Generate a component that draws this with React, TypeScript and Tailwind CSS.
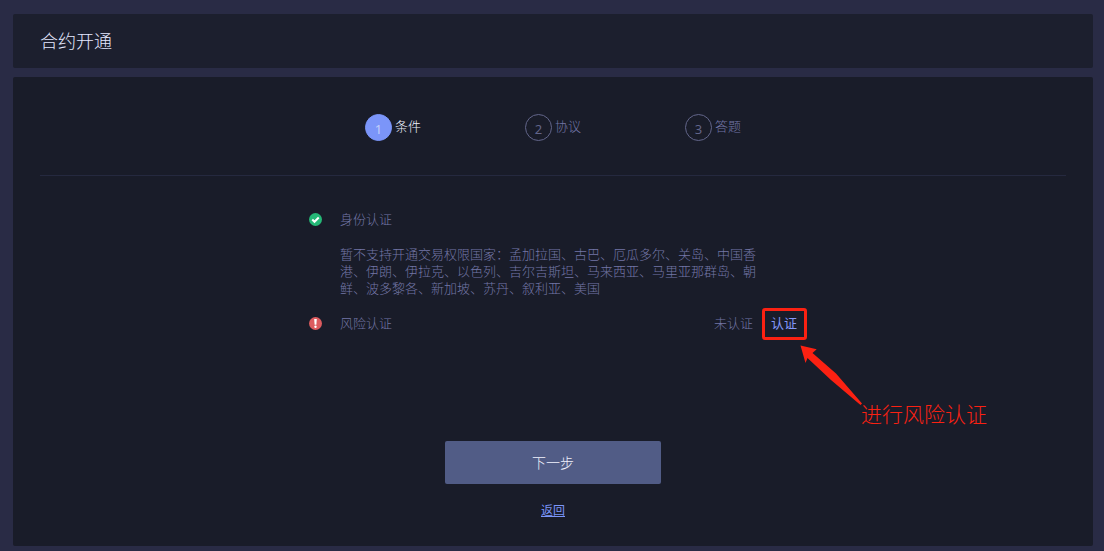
import clsx from 'clsx'

const steps = ['条件', '协议', '答题']

function PassIcon() {
    return (
        <svg className="size-[13px]" viewBox="0 0 26 26" aria-hidden="true">
            <circle cx="13" cy="13" r="13" fill="#25b877" />
            <path d="M6.500 13l4.500 4.500L19.500 9" fill="none" stroke="#fff" strokeWidth="4" />
        </svg>
    )
}

function WarnIcon() {
    return (
        <svg className="size-[13px]" viewBox="0 0 26 26" aria-hidden="true">
            <circle cx="13" cy="13" r="13" fill="#dc5b5f" />
            <path d="M10.4 4h5.2l-.8 11.500h-3.600z" fill="#fff" />
            <circle cx="13" cy="19.6" r="2.4" fill="#fff" />
        </svg>
    )
}

function Steps() {
    return (
        <ol className="flex justify-center gap-[104px] border-b border-[#25293f] pt-[37px] pb-[34px]">
            {steps.map((label, i) => (
                <li key={label} className="flex gap-[3px]">
                    <span
                        className={clsx(
                            'flex size-[27px] items-center justify-center rounded-full border pt-0.5 leading-4 font-normal',
                            i === 0 ? 'border-[#7b95f9] bg-[#7b95f9] text-[#c3cefb]' : 'border-[#62658a] text-[#62658a]'
                        )}
                    >
                        {i + 1}
                    </span>
                    <span className={clsx('leading-6', i === 0 ? 'text-[#eef1ff]' : 'text-[#7376a6]')}>{label}</span>
                </li>
            ))}
        </ol>
    )
}

function Callout() {
    return (
        <div className="pointer-events-none absolute -top-[6px] -left-[9px] text-[#fb2112]">
            <div className="h-8 w-[45px] rounded-[3px] border-3 border-[#fb2112]" />
            <svg className="absolute top-9 left-9" width="66" height="64" viewBox="0 0 66 64" aria-hidden="true">
                <path d="M2.5 1.5L18.7 5.3L14.5 9L38 29.5L64 59.5L62.5 61L33 36L9.5 14L7.5 19Z" fill="currentColor" />
            </svg>
            <p className="absolute top-[90px] left-[99px] text-[21px] leading-8 whitespace-nowrap">进行风险认证</p>
        </div>
    )
}

export default function App() {
    return (
        <div className="flex min-h-screen flex-col gap-[9px] bg-[#292b45] pt-[14px] pr-[11px] pb-[5px] pl-[13px] font-['Noto_Sans','Noto_Sans_CJK_SC',sans-serif] text-[13px] font-light text-[#7376a6]">
            <header className="rounded-xs bg-[#1c1f2e] px-[27px] pt-[14px] pb-[13px]">
                <h1 className="text-lg leading-[27px] text-[#e4e8ff]">合约开通</h1>
            </header>

            <main className="flex-1 rounded-xs bg-[#191c29] px-[27px]">
                <Steps />

                <ul className="mx-auto max-w-[488px] pt-[34px]">
                    <li className="grid grid-cols-[31px_1fr] items-center">
                        <PassIcon />
                        <span className="leading-[19px]">身份认证</span>
                        <p className="col-start-2 w-[416px] pt-[17px] leading-[17px]">
                            暂不支持开通交易权限国家：孟加拉国、古巴、厄瓜多尔、关岛、中国香港、伊朗、伊拉克、以色列、吉尔吉斯坦、马来西亚、马里亚那群岛、朝鲜、波多黎各、新加坡、苏丹、叙利亚、美国
                        </p>
                    </li>
                    <li className="grid grid-cols-[31px_1fr_auto_auto] items-center pt-[17px] leading-[19px]">
                        <WarnIcon />
                        <span>风险认证</span>
                        <span>未认证</span>
                        <div className="relative ml-[18px]">
                            <a href="#risk" className="font-normal text-[#8397f8]">认证</a>
                            <Callout />
                        </div>
                    </li>
                </ul>

                <div className="flex flex-col items-center pt-[108px]">
                    <button type="button" className="h-[43px] w-[216px] rounded-xs bg-[#515c86] text-sm text-[#f0f2fd]">
                        下一步
                    </button>
                    <a href="#back" className="mt-[17px] text-xs leading-5 font-normal text-[#7b95f9] underline">返回</a>
                </div>
            </main>
        </div>
    )
}
